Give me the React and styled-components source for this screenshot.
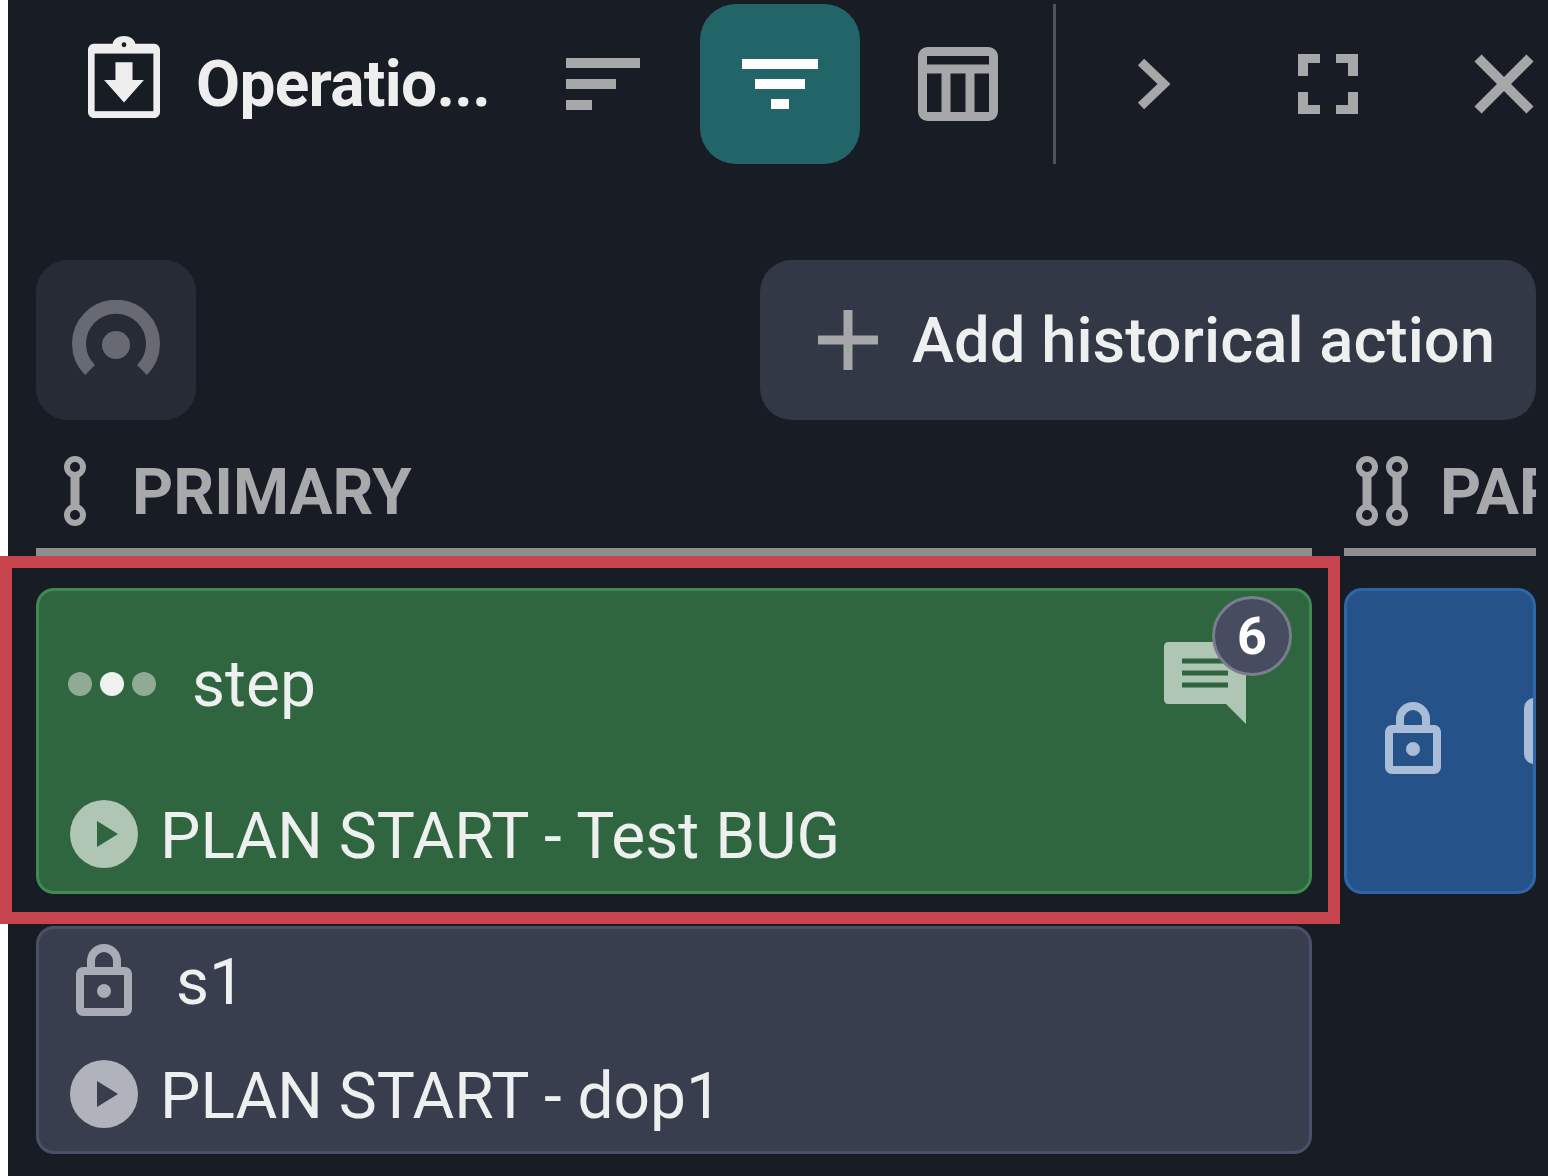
import React from "react";
import styled, { createGlobalStyle } from "styled-components";

const Global = createGlobalStyle`
  html, body {
    margin: 0;
    padding: 0;
    background: #fff;
  }
  body {
    font-family: Roboto, "Liberation Sans", sans-serif;
  }
`;

const Page = styled.div`
  position: relative;
  width: 1548px;
  height: 1176px;
  overflow: hidden;
`;

const Panel = styled.div`
  margin-left: 8px;
  width: 1540px;
  height: 1176px;
  background: #181c24;
  overflow: hidden;
  display: flex;
  flex-direction: column;
  filter: blur(0.6px);
`;

const Toolbar = styled.header`
  display: flex;
  align-items: center;
  height: 160px;
  margin-top: 4px;
  padding-left: 80px;
`;

const Title = styled.h1`
  margin: 0 0 0 36px;
  width: 300px;
  font-size: 64px;
  font-weight: 700;
  letter-spacing: -0.7px;
  color: #eeeeee;
  white-space: nowrap;
`;

const PlainIcon = styled.span`
  display: flex;
  align-items: center;
  justify-content: center;
  width: ${(p) => p.$w || 80}px;
  margin-left: ${(p) => p.$ml || 0}px;
  margin-bottom: ${(p) => p.$mb || 0}px;
  flex: none;
`;

const ActiveButton = styled.button`
  width: 160px;
  height: 160px;
  margin-left: 60px;
  padding: 0;
  border: none;
  border-radius: 36px;
  background: #216569;
  display: flex;
  align-items: center;
  justify-content: center;
`;

const Divider = styled.div`
  width: 3px;
  height: 160px;
  margin-left: 55px;
  background: #50545b;
`;

const ActionRow = styled.div`
  display: flex;
  justify-content: space-between;
  margin-top: 96px;
  padding: 0 12px 0 28px;
`;

const GaugeButton = styled.button`
  width: 160px;
  height: 160px;
  padding: 0;
  border: none;
  border-radius: 32px;
  background: #262b35;
  display: flex;
  align-items: center;
  justify-content: center;
`;

const AddButton = styled.button`
  width: 776px;
  height: 160px;
  padding: 0 0 0 58px;
  border: none;
  border-radius: 32px;
  background: #323846;
  color: #eef0f0;
  font-family: inherit;
  font-size: 63.4px;
  font-weight: 500;
  display: flex;
  align-items: center;
  gap: 34px;
  white-space: nowrap;
`;

const Board = styled.div`
  display: grid;
  grid-template-columns: 1276px 192px;
  column-gap: 32px;
  margin-top: 28px;
  margin-left: 28px;
`;

const Column = styled.section`
  display: flex;
  flex-direction: column;
  min-width: 0;
`;

const ColumnHead = styled.div`
  display: flex;
  align-items: center;
  height: 108px;
  padding-left: ${(p) => p.$pad}px;
  padding-bottom: 14px;
  gap: ${(p) => p.$gap}px;
  border-bottom: 8px solid #8e8e8e;
  overflow: hidden;
  box-sizing: border-box;
  color: #a8a9ab;
  font-size: 64px;
  font-weight: 700;
  white-space: nowrap;
`;

const HeadLabel = styled.span`
  margin-top: 2px;
`;

const LinkPair = styled.div`
  display: flex;
  gap: 4px;
  flex: none;
`;

const Card = styled.article`
  position: relative;
  box-sizing: border-box;
  height: ${(p) => p.$h}px;
  margin-top: ${(p) => p.$mt}px;
  border: 3px solid ${(p) => p.$line};
  border-radius: 18px;
  background: ${(p) => p.$bg};
  overflow: hidden;
  display: flex;
  flex-direction: column;
  color: #eef0f0;
`;

const CardTop = styled.div`
  display: flex;
  align-items: center;
  height: ${(p) => p.$h}px;
  margin-top: ${(p) => p.$mt}px;
  padding-left: ${(p) => p.$pad}px;
  gap: ${(p) => p.$gap}px;
  font-size: 64px;
`;

const CardBottom = styled.div`
  display: flex;
  align-items: center;
  margin-top: ${(p) => p.$mt}px;
  padding-left: 31px;
  gap: 22px;
  font-size: 64px;
  white-space: nowrap;
`;

const CardText = styled.span`
  margin-top: ${(p) => p.$nudge || 0}px;
`;

const Dots = styled.div`
  display: flex;
  gap: 8px;
`;

const Dot = styled.i`
  width: 24px;
  height: 24px;
  border-radius: 50%;
  background: ${(p) => (p.$on ? "#eef2ee" : "#8fab96")};
`;

const Comment = styled.div`
  position: absolute;
  left: 1125px;
  top: 49px;
  width: 84px;
  height: 84px;
`;

const Badge = styled.span`
  position: absolute;
  left: 48px;
  top: -44px;
  box-sizing: border-box;
  width: 80px;
  height: 80px;
  border: 3px solid #7a7d8c;
  border-radius: 50%;
  background: #474d60;
  color: #fff;
  font-size: 52px;
  font-weight: 700;
  display: flex;
  align-items: center;
  justify-content: center;
`;

const BlueLock = styled.div`
  position: absolute;
  left: 38px;
  top: 111px;
`;

const ClippedChip = styled.div`
  position: absolute;
  right: -3px;
  top: 107px;
  width: 12px;
  height: 66px;
  border-radius: 10px 0 0 10px;
  background: #a9bdd9;
`;

const Highlight = styled.div`
  position: absolute;
  left: 0;
  top: 556px;
  width: 1340px;
  height: 368px;
  box-sizing: border-box;
  border: 12px solid #c8444e;
  pointer-events: none;
`;

const ClipboardIcon = () => (
  <svg width="72" height="82" viewBox="0 0 76 84" preserveAspectRatio="none">
    <path
      d="M6 8h20c1-5 6-8 12-8s11 3 12 8h20c3 0 6 3 6 6v64c0 3-3 6-6 6H6c-3 0-6-3-6-6V14c0-3 3-6 6-6z"
      fill="#eeeeee"
    />
    <rect x="7" y="18" width="62" height="59" fill="#181c24" />
    <circle cx="38" cy="9" r="2.5" fill="#181c24" />
    <path d="M29 27h18v18h12L38 68 17 45h12z" fill="#eeeeee" />
  </svg>
);

const SortIcon = () => (
  <svg width="74" height="52" viewBox="0 0 74 52" fill="#a6a7a9">
    <rect width="74" height="10" />
    <rect y="21" width="50" height="10" />
    <rect y="42" width="26" height="10" />
  </svg>
);

const FilterIcon = () => (
  <svg width="76" height="50" viewBox="0 0 76 50" fill="#ffffff">
    <rect width="76" height="10" />
    <rect x="13" y="20" width="50" height="10" />
    <rect x="29" y="40" width="18" height="10" />
  </svg>
);

const TableIcon = () => (
  <svg width="80" height="74" viewBox="0 0 80 74">
    <rect x="4.5" y="4.5" width="71" height="65" rx="5" fill="none" stroke="#a6a7a9" strokeWidth="9" />
    <path d="M4 22h72M28 22v48M52 22v48" stroke="#a6a7a9" strokeWidth="9" />
  </svg>
);

const ChevronIcon = () => (
  <svg width="34" height="52" viewBox="0 0 34 52">
    <path d="M5 4l23 22L5 48" fill="none" stroke="#a6a7a9" strokeWidth="9" />
  </svg>
);

const FullscreenIcon = () => (
  <svg width="60" height="60" viewBox="0 0 60 60" fill="#a6a7a9">
    <path d="M0 0h22v9H10v13H0zM38 0h22v22H50V9H38zM0 38h10v13h12v9H0zM50 38h10v22H38v-9h12z" />
  </svg>
);

const CloseIcon = () => (
  <svg width="60" height="60" viewBox="0 0 60 60">
    <path d="M4 4l52 52M56 4L4 56" stroke="#a6a7a9" strokeWidth="10" />
  </svg>
);

const GaugeIcon = () => (
  <svg width="90" height="80" viewBox="0 0 90 80">
    <path d="M19 70A37 37 0 1 1 71 70" fill="none" stroke="#676a72" strokeWidth="14" />
    <circle cx="45" cy="45" r="14" fill="#676a72" />
  </svg>
);

const PlusIcon = () => (
  <svg width="60" height="60" viewBox="0 0 60 60">
    <path d="M30 0v60M0 30h60" stroke="#a6a7a9" strokeWidth="9" />
  </svg>
);

const LinkIcon = () => (
  <svg width="26" height="70" viewBox="0 0 26 70" fill="none" stroke="#a6a7a9">
    <circle cx="13" cy="11" r="8" strokeWidth="6" />
    <circle cx="13" cy="59" r="8" strokeWidth="6" />
    <path d="M13 19v32" strokeWidth="9" />
  </svg>
);

const PlayIcon = ({ fill, mark }) => (
  <svg width="68" height="68" viewBox="0 0 68 68">
    <circle cx="34" cy="34" r="34" fill={fill} />
    <path d="M27 21l21 13-21 13z" fill={mark} />
  </svg>
);

const LockIcon = ({ color, hole }) => (
  <svg width="56" height="72" viewBox="0 0 56 72">
    <path d="M15 26V17a13 13 0 0 1 26 0v9" fill="none" stroke={color} strokeWidth="8" />
    <rect x="4" y="27" width="48" height="41" rx="3" fill={hole} stroke={color} strokeWidth="8" />
    <circle cx="28" cy="47" r="7" fill={color} />
  </svg>
);

const CommentIcon = () => (
  <svg width="84" height="84" viewBox="0 0 84 84">
    <path d="M4 2h74c2 0 4 2 4 4v78L62 64H4c-2 0-4-2-4-4V6c0-2 2-4 4-4z" fill="#afc6b4" />
    <path d="M18 21h46M18 33h46M18 45h46" stroke="#2f653f" strokeWidth="5" />
  </svg>
);

export default function App() {
  return (
    <Page>
      <Global />
      <Panel>
        <Toolbar>
          <PlainIcon $w={72} $mb={14}>
            <ClipboardIcon />
          </PlainIcon>
          <Title>Operatio...</Title>
          <PlainIcon $w={74} $ml={70}>
            <SortIcon />
          </PlainIcon>
          <ActiveButton>
            <FilterIcon />
          </ActiveButton>
          <PlainIcon $ml={58}>
            <TableIcon />
          </PlainIcon>
          <Divider />
          <PlainIcon $w={34} $ml={80}>
            <ChevronIcon />
          </PlainIcon>
          <PlainIcon $w={60} $ml={128}>
            <FullscreenIcon />
          </PlainIcon>
          <PlainIcon $w={60} $ml={116}>
            <CloseIcon />
          </PlainIcon>
        </Toolbar>

        <ActionRow>
          <GaugeButton>
            <GaugeIcon />
          </GaugeButton>
          <AddButton>
            <PlusIcon />
            Add historical action
          </AddButton>
        </ActionRow>

        <Board>
          <Column>
            <ColumnHead $pad={26} $gap={44}>
              <LinkIcon />
              <HeadLabel>PRIMARY</HeadLabel>
            </ColumnHead>
            <Card $h={306} $mt={32} $bg="#2f653f" $line="#3e8a50">
              <CardTop $h={70} $mt={58} $pad={29} $gap={36}>
                <Dots>
                  <Dot />
                  <Dot $on />
                  <Dot />
                </Dots>
                step
              </CardTop>
              <CardBottom $mt={75}>
                <PlayIcon fill="#afc6b4" mark="#2f653f" />
                <CardText $nudge={5}>PLAN START - Test BUG</CardText>
              </CardBottom>
              <Comment>
                <CommentIcon />
                <Badge>6</Badge>
              </Comment>
            </Card>
            <Card $h={228} $mt={32} $bg="#393e4f" $line="#4a5068">
              <CardTop $h={72} $mt={15} $pad={37} $gap={44}>
                <LockIcon color="#a9abb5" hole="#393e4f" />
                <CardText $nudge={4}>s1</CardText>
              </CardTop>
              <CardBottom $mt={38}>
                <PlayIcon fill="#b0b2bc" mark="#393e4f" />
                <CardText $nudge={5}>PLAN START - dop1</CardText>
              </CardBottom>
            </Card>
          </Column>

          <Column>
            <ColumnHead $pad={10} $gap={30}>
              <LinkPair>
                <LinkIcon />
                <LinkIcon />
              </LinkPair>
              <HeadLabel>PARALLEL</HeadLabel>
            </ColumnHead>
            <Card $h={306} $mt={32} $bg="#26528a" $line="#2f66a8">
              <BlueLock>
                <LockIcon color="#a9bdd9" hole="#26528a" />
              </BlueLock>
              <ClippedChip />
            </Card>
          </Column>
        </Board>
      </Panel>
      <Highlight />
    </Page>
  );
}
